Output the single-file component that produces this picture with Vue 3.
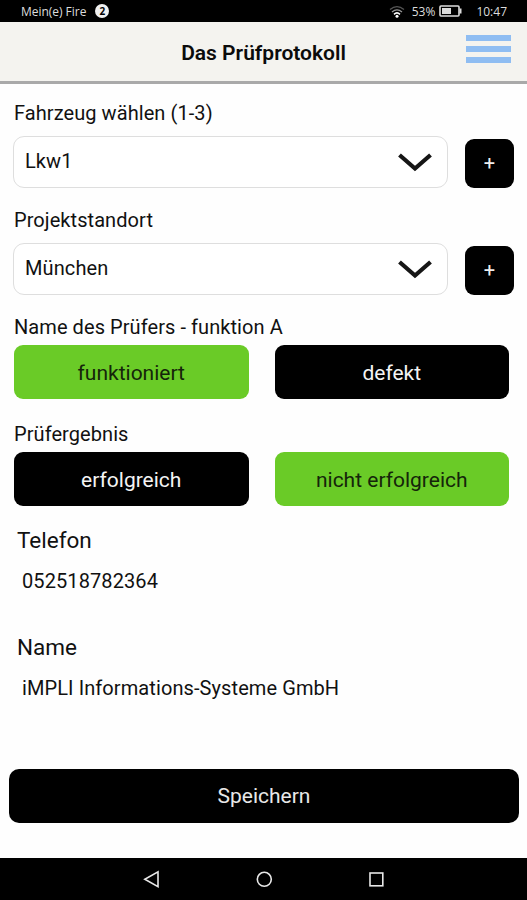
<script setup>
import { ref } from 'vue';

const selects = ref([
    { label: 'Fahrzeug wählen (1-3)', value: 'Lkw1' },
    { label: 'Projektstandort', value: 'München' },
]);

const checks = ref([
    { label: 'Name des Prüfers - funktion A', options: ['funktioniert', 'defekt'], selected: 'funktioniert' },
    { label: 'Prüfergebnis', options: ['erfolgreich', 'nicht erfolgreich'], selected: 'nicht erfolgreich' },
]);

const infos = [
    { label: 'Telefon', value: '052518782364' },
    { label: 'Name', value: 'iMPLI Informations-Systeme GmbH' },
];
</script>

<template>
  <div class="screen">
    <div class="status-bar">
        <span class="device">Mein(e) Fire</span>
        <span class="count">2</span>
        <svg class="wifi" width="16" height="13" viewBox="0 0 16 13" fill="none">
            <path d="M1 4.5Q8 -1.2 15 4.5" stroke="#555" stroke-width="1.3" />
            <path d="M3 7Q8 2.8 13 7" stroke="#999" stroke-width="1.3" />
            <path d="M5 9.3Q8 6.6 11 9.3" stroke="#fff" stroke-width="1.6" />
            <circle cx="8" cy="11.2" r="1.5" fill="#fff" />
        </svg>
        <span class="percent">53%</span>
        <svg class="battery" width="23" height="12" viewBox="0 0 23 12">
            <rect x="1" y="1" width="19" height="10" rx="1" fill="none" stroke="#ddd" stroke-width="1.6" />
            <rect x="3" y="3" width="9" height="6" fill="#ddd" />
            <rect x="20.5" y="3.5" width="2" height="5" fill="#ddd" />
        </svg>
        <span class="time">10:47</span>
    </div>

    <header class="header">
        <h1>Das Prüfprotokoll</h1>
        <button class="menu-btn" aria-label="Menü">
            <span></span>
            <span></span>
            <span></span>
        </button>
    </header>

    <main class="form">
        <div v-for="item in selects" :key="item.label" class="field">
            <div class="label">{{ item.label }}</div>
            <div class="select-row">
                <div class="select">
                    <span>{{ item.value }}</span>
                    <svg width="36" height="22" viewBox="0 0 36 22" fill="none">
                        <path d="M2.5 3L18 16.5L33.5 3" stroke="#161616" stroke-width="4.2" />
                    </svg>
                </div>
                <button class="add-btn">+</button>
            </div>
        </div>

        <div v-for="item in checks" :key="item.label" class="field">
            <div class="label">{{ item.label }}</div>
            <div class="btn-row">
                <button
                    v-for="option in item.options"
                    :key="option"
                    class="option-btn"
                    :class="{ active: item.selected === option }"
                    @click="item.selected = option"
                >{{ option }}</button>
            </div>
        </div>

        <div v-for="item in infos" :key="item.label" class="info">
            <div class="info-label">{{ item.label }}</div>
            <div class="info-value">{{ item.value }}</div>
        </div>

        <button class="save-btn">Speichern</button>
    </main>

    <nav class="nav-bar">
        <svg width="18" height="20" viewBox="0 0 18 20" fill="none" stroke="#e8e8e8" stroke-width="1.6">
            <path d="M16 2.8V17.6L2.8 10.2Z" />
        </svg>
        <svg width="18" height="20" viewBox="0 0 18 20" fill="none" stroke="#e8e8e8" stroke-width="1.6">
            <circle cx="9.3" cy="10.3" r="7" />
        </svg>
        <svg width="18" height="20" viewBox="0 0 18 20" fill="none" stroke="#e8e8e8" stroke-width="1.6">
            <rect x="3" y="4" width="12.8" height="12.8" />
        </svg>
    </nav>
  </div>
</template>

<style>
    body {
        margin: 0;
        background: #fff;
    }
</style>

<style scoped>
    .screen {
        width: 527px;
        height: 900px;
        display: flex;
        flex-direction: column;
        box-sizing: border-box;
        overflow: hidden;
        background: #fefefe;
        color: #111;
        font-family: Roboto, sans-serif;
        font-size: 20px;
    }

    button {
        padding: 0;
        border: none;
        font-family: inherit;
        cursor: pointer;
    }

    .status-bar {
        height: 22px;
        flex-shrink: 0;
        display: flex;
        align-items: center;
        box-sizing: border-box;
        padding: 0 20px 0 21px;
        background: #000;
        color: #ddd;
        font-family: "Open Sans", sans-serif;
        font-size: 12px;
        white-space: nowrap;
    }

    .device {
        letter-spacing: -0.03px;
    }

    .count {
        width: 14px;
        height: 14px;
        margin-left: 9px;
        border-radius: 50%;
        background: #f0f0f0;
        color: #000;
        font-size: 10px;
        font-weight: bold;
        line-height: 14px;
        text-align: center;
    }

    .wifi {
        margin-left: auto;
    }

    .percent {
        margin-left: 7px;
    }

    .battery {
        margin-left: 4px;
    }

    .time {
        margin-left: 14px;
    }

    .header {
        height: 62px;
        flex-shrink: 0;
        display: grid;
        grid-template-columns: 1fr auto 1fr;
        align-items: center;
        box-sizing: border-box;
        padding: 0 16px;
        background: #f4f3ef;
        border-bottom: 3px solid #a9a9a9;
    }

    h1 {
        grid-column: 2;
        margin: 3px 0 0 0;
        color: #0b0b0b;
        font-size: 21px;
        font-weight: 600;
        line-height: 24px;
    }

    .menu-btn {
        justify-self: end;
        align-self: start;
        display: flex;
        flex-direction: column;
        gap: 5px;
        width: 45px;
        margin-top: 13px;
        background: none;
    }

    .menu-btn span {
        height: 6px;
        background: #8fbdf2;
    }

    .form {
        flex: 1;
        padding: 18px 9px 0 9px;
    }

    .field {
        height: 107px;
        padding: 0 9px 0 4px;
        box-sizing: border-box;
    }

    .label {
        height: 22px;
        padding-left: 1px;
        line-height: 22px;
        letter-spacing: 0.07px;
    }

    .select-row {
        display: flex;
        align-items: flex-end;
        gap: 17px;
        margin-top: 12px;
        margin-right: -5px;
    }

    .select {
        flex: 1;
        height: 52px;
        display: flex;
        justify-content: space-between;
        box-sizing: border-box;
        padding: 12px 14px 0 11px;
        border: 1px solid #dedede;
        border-radius: 11px;
        background: #fff;
        line-height: 25px;
        letter-spacing: 0.1px;
    }

    .select svg {
        margin-top: 3px;
    }

    .add-btn {
        width: 49px;
        height: 49px;
        padding-bottom: 1px;
        border-radius: 9px;
        background: #000;
        color: #eee;
        font-size: 20px;
    }

    .btn-row {
        display: flex;
        gap: 26px;
        margin: 7px 0 0 1px;
    }

    .option-btn {
        flex: 1;
        height: 54px;
        padding-top: 2px;
        border-radius: 9px;
        background: #000;
        color: #f4f4f4;
        font-size: 21px;
    }
    .option-btn.active {
        background: #6acb27;
        color: #15250a;
    }

    .info {
        height: 107px;
        padding-left: 8px;
    }

    .info-label {
        height: 21px;
        font-size: 22.5px;
        line-height: 20px;
    }

    .info-value {
        padding: 18px 0 0 5px;
        line-height: 24px;
        letter-spacing: 0.09px;
    }

    .save-btn {
        width: 510px;
        height: 54px;
        margin-top: 25px;
        border-radius: 10px;
        background: #000;
        color: #e8e8e8;
        font-size: 21px;
    }

    .nav-bar {
        height: 42px;
        flex-shrink: 0;
        display: flex;
        justify-content: center;
        align-items: center;
        gap: 94.5px;
        background: #000;
    }
</style>
